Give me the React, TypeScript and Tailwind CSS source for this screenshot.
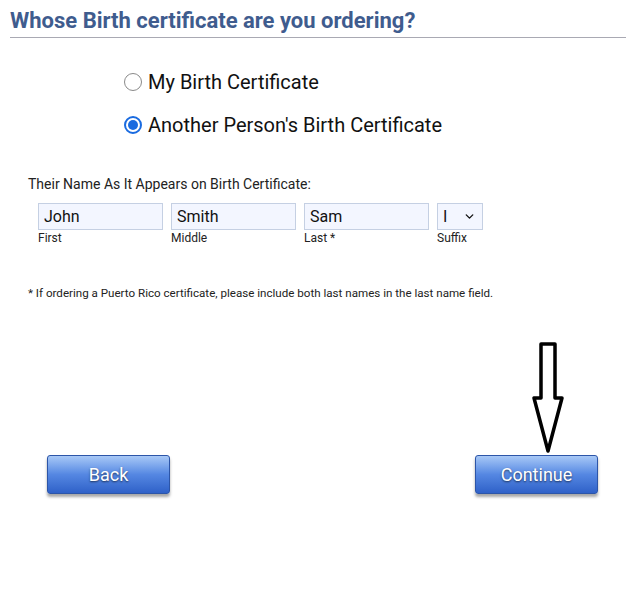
import { ChevronDown } from "lucide-react";

function NameField({ value, label, width }: { value: string; label: string; width: string }) {
  return (
    <div className="flex flex-col">
      <input
        readOnly
        value={value}
        className={`${width} h-[27px] border border-[#c5d0e3] bg-[#f3f6ff] px-[5px] text-[16px] text-[#111] outline-none`}
      />
      <span className="mt-[1px] text-[12px] leading-[15px] text-[#222]">{label}</span>
    </div>
  );
}

function BlueButton({ children }: { children: string }) {
  return (
    <button className="h-[39px] w-[123px] rounded-[3px] border border-[#2c55a8] bg-gradient-to-b from-[#a8c8f6] via-[#5587e2] to-[#2f61c8] text-[18px] text-white shadow-[0_3px_3px_rgba(0,0,0,0.35)] [text-shadow:0_1px_2px_rgba(0,0,0,0.6)]">
      {children}
    </button>
  );
}

export default function App() {
  return (
    <div className="relative h-[606px] w-[636px] bg-white font-['Roboto',sans-serif] text-[#111]">
      {/* Header */}
      <div className="mx-[10px] border-b border-[#a9a9b3] pt-[9px] pb-[4px]">
        <h1 className="text-[22px] font-bold leading-[24px] text-[#3f5c8e]">
          Whose Birth certificate are you ordering?
        </h1>
      </div>

      {/* Radio options */}
      <div className="ml-[124px] mt-[34px] flex flex-col gap-[23px]">
        <label className="flex items-center gap-[6px] text-[20px] leading-[20px]">
          <span className="h-[18px] w-[18px] rounded-full border-[1.5px] border-[#8a8a8a] bg-white" />
          My Birth Certificate
        </label>
        <label className="flex items-center gap-[6px] text-[20px] leading-[20px]">
          <span className="flex h-[18px] w-[18px] items-center justify-center rounded-full border-[2px] border-[#1a6be0] bg-white">
            <span className="h-[10px] w-[10px] rounded-full bg-[#1a6be0]" />
          </span>
          Another Person's Birth Certificate
        </label>
      </div>

      {/* Name fields */}
      <div className="ml-[28px] mt-[40px] text-[14px] leading-[18px] text-[#222]">
        Their Name As It Appears on Birth Certificate:
      </div>
      <div className="ml-[38px] mt-[10px] flex gap-[8px]">
        <NameField value="John" label="First" width="w-[125px]" />
        <NameField value="Smith" label="Middle" width="w-[125px]" />
        <NameField value="Sam" label="Last *" width="w-[125px]" />
        <div className="flex flex-col">
          <div className="flex h-[27px] w-[46px] items-center justify-between border border-[#c5d0e3] bg-[#f3f6ff] pl-[5px] pr-[6px] text-[16px]">
            <span>I</span>
            <ChevronDown size={13} strokeWidth={2.5} />
          </div>
          <span className="mt-[1px] text-[12px] leading-[15px] text-[#222]">Suffix</span>
        </div>
      </div>

      <p className="ml-[28px] mt-[39px] text-[11.6px] leading-[16px] text-[#222]">
        * If ordering a Puerto Rico certificate, please include both last names in the last name field.
      </p>

      {/* Buttons */}
      <div className="mt-[154px] flex justify-between pl-[47px] pr-[38px]">
        <BlueButton>Back</BlueButton>
        <BlueButton>Continue</BlueButton>
      </div>

      {/* Annotation arrow */}
      <svg className="absolute left-[530px] top-[340px]" width="36" height="116" viewBox="0 0 36 116">
        <path
          d="M11 4 H25 V58 H32 L18 111 L4 58 H11 Z"
          fill="none"
          stroke="#000"
          strokeWidth="3.5"
          strokeLinejoin="round"
        />
      </svg>
    </div>
  );
}
